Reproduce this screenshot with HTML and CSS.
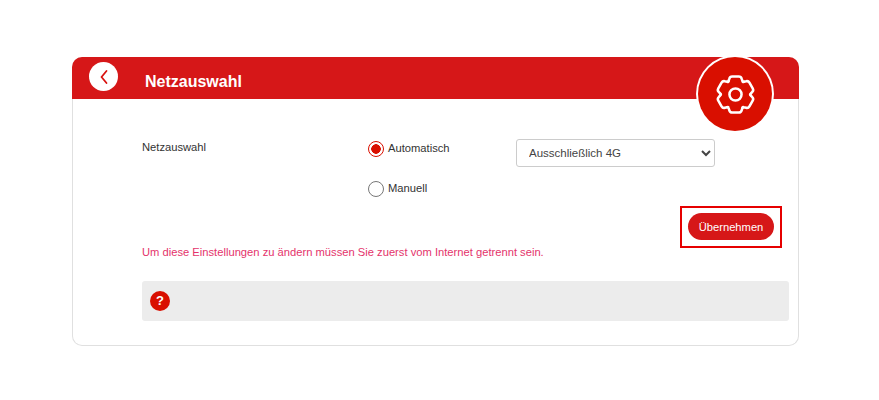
FILE: index.html
```html
<!DOCTYPE html>
<html lang="de">
<head>
<meta charset="utf-8">
<title>Netzauswahl</title>
<link rel="stylesheet" href="styles.css">
</head>
<body>
<main class="card">
  <header class="head">
    <button class="back" aria-label="Zurück">
      <svg width="12" height="16" viewBox="0 0 12 16"><path d="M8.500 2 3.500 8l5 6" fill="none" stroke="#d9120f" stroke-width="1.800" stroke-linecap="round" stroke-linejoin="round"/></svg>
    </button>
    <h1 class="title">Netzauswahl</h1>
    <div class="badge">
      <svg width="41" height="41" viewBox="-22 -22 44 44">
        <g fill="none" stroke="#fff" stroke-width="2.700" stroke-linecap="round">
          <defs><path id="tooth" d="M-7.400-14.500-6.600-17Q-6-19.300-3.500-19.300L3.500-19.300Q6-19.300 6.600-17L7.400-14.500Q7.600-13 8.860-13.660"/></defs>
          <use href="#tooth"/>
          <use href="#tooth" transform="rotate(60)"/>
          <use href="#tooth" transform="rotate(120)"/>
          <use href="#tooth" transform="rotate(180)"/>
          <use href="#tooth" transform="rotate(240)"/>
          <use href="#tooth" transform="rotate(300)"/>
          <circle r="6.500"/>
        </g>
      </svg>
    </div>
  </header>
  <section class="body">
    <div class="form">
      <div class="label">Netzauswahl</div>
      <div class="options">
        <div class="opt"><span class="radio on"></span><span class="opt-text">Automatisch</span></div>
        <div class="opt"><span class="radio"></span><span class="opt-text">Manuell</span></div>
      </div>
      <select class="sel"><option>Ausschließlich 4G</option></select>
    </div>
    <div class="actions">
      <div class="hl"><button class="apply">Übernehmen</button></div>
    </div>
    <p class="warn">Um diese Einstellungen zu ändern müssen Sie zuerst vom Internet getrennt sein.</p>
    <div class="help"><span class="q">?</span></div>
  </section>
</main>
</body>
</html>
```
FILE: styles.css
```css
* { box-sizing: border-box; }
html, body { margin: 0; padding: 0; background: #fff; }
body { font-family: "Liberation Sans", Arial, sans-serif; color: #333; padding: 57px 80px 0 72px; height: 400px; overflow: hidden; }
.card { width: 727px; height: 289px; border: 1px solid #e0e0e0; border-top: 0; border-radius: 10px; }
.head { position: relative; height: 42px; margin: 0 -1px; background: #d61718; border-radius: 10px 10px 0 0; display: flex; align-items: flex-start; padding: 5px 0 0 17px; }
.back { width: 29px; height: 29px; border: 0; padding: 0; border-radius: 50%; background: #fff; display: flex; align-items: center; justify-content: center; }
.title { margin: 8px 0 0 27px; font-size: 16px; line-height: 24px; font-weight: 700; color: #fff; }
.badge { position: absolute; left: 626px; top: 0; width: 74px; height: 74px; border-radius: 50%; background: #d90f00; box-shadow: 0 0 0 2px #fff; display: flex; align-items: center; justify-content: center; }
.body { padding: 0 9px 0 69px; }
.form { display: flex; align-items: flex-start; padding-top: 40px; height: 107px; }
.label { width: 226px; padding-top: 1px; font-size: 11.2px; line-height: 14px; color: #333; }
.options { width: 148px; display: flex; flex-direction: column; gap: 22px; }
.opt { display: flex; align-items: flex-start; gap: 4px; font-size: 11.2px; line-height: 14px; height: 18px; }
.opt-text { padding-top: 2px; }
.radio { width: 16px; height: 16px; margin-top: 2px; border: 1.5px solid #777; border-radius: 50%; background: #fff; flex: none; }
.radio.on { border-color: #d90f00; background: radial-gradient(circle, #d90f00 0 4.5px, #fff 5px); }
.sel { width: 199px; height: 28px; padding: 0 0 0 8px; border: 1px solid #ccc; border-radius: 3px; background: #fff; font: 11.5px "Liberation Sans", Arial, sans-serif; color: #444; }
.actions { display: flex; justify-content: flex-end; padding-right: 7px; margin-bottom: -3px; }
.hl { width: 102px; height: 42px; padding-top: 5px; border: 2px solid #e60000; display: flex; align-items: flex-start; justify-content: center; }
.apply { width: 86px; height: 27px; border: 0; border-radius: 14px; background: #d61718; color: #fff; font: 11.2px "Liberation Sans", Arial, sans-serif; padding: 0; }
.warn { margin: 0; height: 36px; font-size: 11.2px; line-height: 14px; color: #e4336b; }
.help { height: 40px; background: #ececec; border-radius: 3px; padding: 10px 0 0 8px; }
.q { display: block; width: 20px; height: 20px; border-radius: 50%; background: #d90f00; color: #fff; font-size: 13px; font-weight: 700; line-height: 20px; text-align: center; }
```
